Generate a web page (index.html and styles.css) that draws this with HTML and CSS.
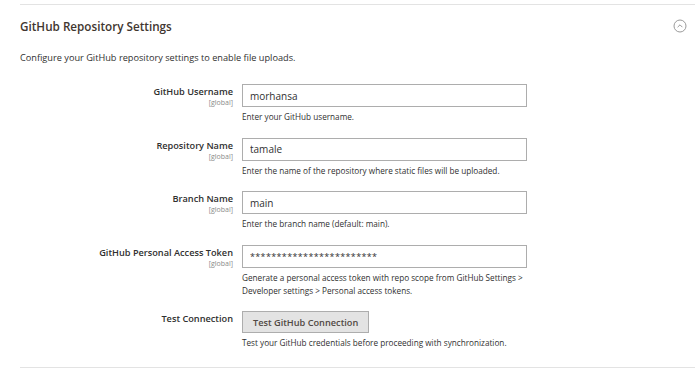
FILE: index.html
```html
<!DOCTYPE html>
<html lang="en">
<head>
    <meta charset="UTF-8">
    <meta name="viewport" content="width=device-width, initial-scale=1.0">
    <title>GitHub Repository Settings</title>
    <link rel="stylesheet" href="styles.css">
</head>
<body>
    <section class="config-section">
        <div class="section-head">
            <h2>GitHub Repository Settings</h2>
            <!-- collapse toggle -->
            <svg class="toggle-icon" width="14" height="14" viewBox="0 0 14 14">
                <circle cx="7" cy="7" r="6" fill="none" stroke="#9a9a9a" stroke-width="1"/>
                <path d="M4.6 8.2 L7 5.8 L9.4 8.2" fill="none" stroke="#9a9a9a" stroke-width="1"/>
            </svg>
        </div>

        <p class="section-intro">Configure your GitHub repository settings to enable file uploads.</p>

        <div class="fields">
            <div class="field-row">
                <div class="field-label">
                    <span>GitHub Username</span>
                    <span class="scope">[global]</span>
                </div>
                <div class="field-control">
                    <input type="text" class="text-input" value="morhansa">
                    <p class="note">Enter your GitHub username.</p>
                </div>
            </div>

            <div class="field-row">
                <div class="field-label">
                    <span>Repository Name</span>
                    <span class="scope">[global]</span>
                </div>
                <div class="field-control">
                    <input type="text" class="text-input" value="tamale">
                    <p class="note">Enter the name of the repository where static files will be uploaded.</p>
                </div>
            </div>

            <div class="field-row">
                <div class="field-label">
                    <span>Branch Name</span>
                    <span class="scope">[global]</span>
                </div>
                <div class="field-control">
                    <input type="text" class="text-input" value="main">
                    <p class="note">Enter the branch name (default: main).</p>
                </div>
            </div>

            <div class="field-row">
                <div class="field-label">
                    <span>GitHub Personal Access Token</span>
                    <span class="scope">[global]</span>
                </div>
                <div class="field-control">
                    <input type="text" class="text-input token" value="************************">
                    <p class="note">Generate a personal access token with repo scope from GitHub Settings &gt; Developer settings &gt; Personal access tokens.</p>
                </div>
            </div>

            <div class="field-row">
                <div class="field-label">
                    <span>Test Connection</span>
                </div>
                <div class="field-control">
                    <button class="button">Test GitHub Connection</button>
                    <p class="note">Test your GitHub credentials before proceeding with synchronization.</p>
                </div>
            </div>
        </div>
    </section>
</body>
</html>
```

FILE: styles.css
```css
body {
    font-family: "Open Sans", "Noto Sans", sans-serif;
    color: #303030;
    background-color: #ffffff;
    margin: 0;
    padding: 0;
}

.config-section {
    margin: 4px 5px 0 20px;
    border-top: 1px solid #e3e3e3;
    border-bottom: 1px solid #e3e3e3;
    padding-bottom: 18px;
}

.section-head {
    display: flex;
    justify-content: space-between;
    align-items: center;
    padding: 12px 8px 0 0;
    height: 18px;
}

h2 {
    font-size: 11.7px;
    font-weight: 600;
    color: #41362f;
    margin: 0;
}

.section-intro {
    font-size: 9.2px;
    margin: 16px 0 20px;
}

.field-row {
    display: grid;
    grid-template-columns: 213px 285px;
    column-gap: 9px;
    margin-bottom: 14.5px;
}

.field-row:last-child {
    margin-bottom: 0;
}

.field-label {
    display: flex;
    flex-direction: column;
    align-items: flex-end;
    text-align: right;
    font-size: 9.2px;
    font-weight: 600;
    padding-top: 2px;
    line-height: 12px;
}

.scope {
    font-size: 7px;
    font-weight: 400;
    color: #8a8a8a;
    line-height: 9px;
}

.text-input {
    display: block;
    width: 100%;
    height: 23px;
    box-sizing: border-box;
    border: 1px solid #adadad;
    padding: 0 7px;
    font-family: inherit;
    font-size: 10px;
    color: #303030;
    margin: 0;
}

.text-input.token {
    font-size: 9px;
    letter-spacing: 0.35px;
}

.note {
    font-size: 8.2px;
    line-height: 13px;
    margin: 3px 0 0;
}

.button {
    display: block;
    background-color: #e3e3e3;
    border: 1px solid #adadad;
    color: #514943;
    font-family: inherit;
    font-size: 9.2px;
    font-weight: 600;
    height: 22px;
    padding: 0 10px;
    margin: 0;
}
```
